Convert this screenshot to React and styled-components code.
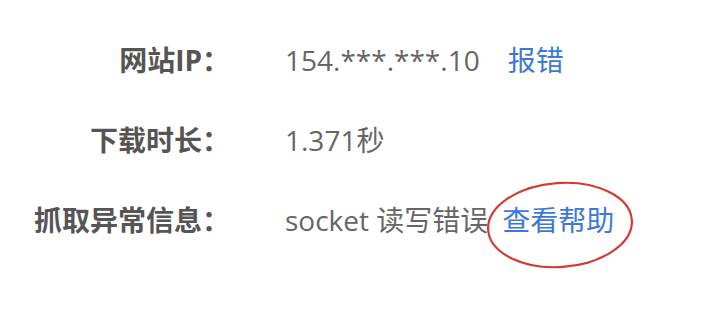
import React from 'react';
import styled, { createGlobalStyle } from 'styled-components';

const GlobalStyle = createGlobalStyle`
  html, body {
    margin: 0;
    padding: 0;
    background: #ffffff;
  }
  body {
    font-family: "Open Sans", "Noto Sans CJK SC", sans-serif;
  }
`;

const InfoTable = styled.div`
  display: grid;
  grid-template-columns: 230px 1fr;
  column-gap: 55px;
  padding: 20px 0 40px;
  width: 701px;
  font-size: 28px;
  line-height: 80px;
`;

const Label = styled.div`
  text-align: right;
  font-weight: 700;
  color: #555555;
  white-space: nowrap;
`;

const Value = styled.div`
  color: #666666;
  white-space: nowrap;
`;

const Link = styled.a`
  color: #3b78d8;
  text-decoration: none;
  margin-left: ${(p) => p.$gap || 0}px;
  position: relative;
  display: inline-block;
`;

const Circle = styled.svg`
  position: absolute;
  display: block;
  left: -15px;
  top: 2px;
  width: 148px;
  height: 88px;
  overflow: visible;
  pointer-events: none;
`;

const rows = [
  { label: '网站IP：', value: '154.***.***.10', link: '报错', gap: 28 },
  { label: '下载时长：', value: '1.371秒' },
  { label: '抓取异常信息：', value: 'socket 读写错误', link: '查看帮助', gap: 14, marked: true },
];

export default function App() {
  return (
    <>
      <GlobalStyle />
      <InfoTable>
        {rows.map((row) => (
          <React.Fragment key={row.label}>
            <Label>{row.label}</Label>
            <Value>
              {row.value}
              {row.link && (
                <Link href="#" $gap={row.gap}>
                  {row.link}
                  {row.marked && (
                    <Circle viewBox="0 0 148 88">
                      <ellipse
                        cx="73"
                        cy="43"
                        rx="72"
                        ry="42"
                        fill="none"
                        stroke="#d23a33"
                        strokeWidth="2.2"
                        transform="rotate(-4 73 43)"
                      />
                    </Circle>
                  )}
                </Link>
              )}
            </Value>
          </React.Fragment>
        ))}
      </InfoTable>
    </>
  );
}
